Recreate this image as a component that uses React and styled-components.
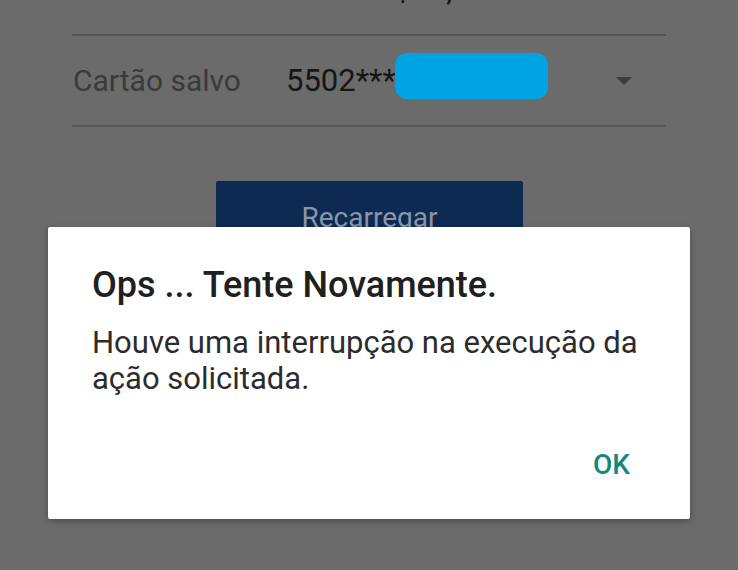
import React from 'react'
import styled, { createGlobalStyle } from 'styled-components'

const GlobalStyle = createGlobalStyle`
  html, body {
    margin: 0;
    padding: 0;
    background: #6b6b6b;
    font-family: Roboto, "Noto Sans", sans-serif;
  }
`

const Screen = styled.div`
  position: relative;
  width: 738px;
  height: 570px;
  overflow: hidden;
  background: #6b6b6b;
`

const Form = styled.div`
  margin-top: -55px;
  padding: 0 72px;
  display: flex;
  flex-direction: column;
`

const Row = styled.div`
  height: 89px;
  display: flex;
  align-items: center;
  border-bottom: 2px solid #555555;
`

const Label = styled.span`
  width: 213px;
  padding-left: 1px;
  font-size: 30px;
  color: #3a3a3a;
`

const Value = styled.span`
  font-size: 31px;
  color: #161616;
  padding-left: ${p => p.$offset || 0}px;
`

const Redacted = styled.span`
  align-self: flex-start;
  width: 153px;
  height: 46px;
  margin-left: -1px;
  margin-top: 17px;
  border-radius: 12px;
  background: #00a3e4;
`

const Caret = styled.span`
  margin-left: auto;
  margin-right: 34px;
  width: 0;
  height: 0;
  border-left: 8px solid transparent;
  border-right: 8px solid transparent;
  border-top: 8px solid #3c3c3c;
`

const ButtonWrap = styled.div`
  display: flex;
  justify-content: center;
  padding-top: 54px;
`

const Button = styled.div`
  width: 307px;
  height: 80px;
  margin-left: 1px;
  border-radius: 2px;
  background: #0c2a52;
  color: #8a96a8;
  font-size: 28px;
  display: flex;
  justify-content: center;
  padding-top: 20px;
  box-sizing: border-box;
`

const Dialog = styled.div`
  position: absolute;
  left: 48px;
  top: 227px;
  width: 642px;
  height: 292px;
  background: #ffffff;
  border-radius: 2px;
  box-shadow: 0 2px 6px rgba(0, 0, 0, 0.3);
  box-sizing: border-box;
  padding: 38px 36px 0 44px;
  display: flex;
  flex-direction: column;
`

const Title = styled.div`
  font-size: 36px;
  font-weight: 500;
  color: #202020;
  line-height: 40px;
`

const Message = styled.div`
  margin-top: 20px;
  font-size: 31px;
  line-height: 36px;
  color: #2c2c2c;
`

const Actions = styled.div`
  margin-top: auto;
  margin-bottom: 38px;
  display: flex;
  justify-content: flex-end;
  padding-right: 24px;
`

const TextButton = styled.span`
  font-size: 28px;
  font-weight: 500;
  color: #13897b;
`

export default function App() {
  return (
    <Screen>
      <GlobalStyle />
      <Form>
        <Row>
          <Label>Valor</Label>
          <Value $offset={89}>R$20,00</Value>
        </Row>
        <Row>
          <Label>Cartão salvo</Label>
          <Value>5502***</Value>
          <Redacted />
          <Caret />
        </Row>
        <ButtonWrap>
          <Button>Recarregar</Button>
        </ButtonWrap>
      </Form>
      <Dialog>
        <Title>Ops ... Tente Novamente.</Title>
        <Message>Houve uma interrupção na execução da ação solicitada.</Message>
        <Actions>
          <TextButton>OK</TextButton>
        </Actions>
      </Dialog>
    </Screen>
  )
}
